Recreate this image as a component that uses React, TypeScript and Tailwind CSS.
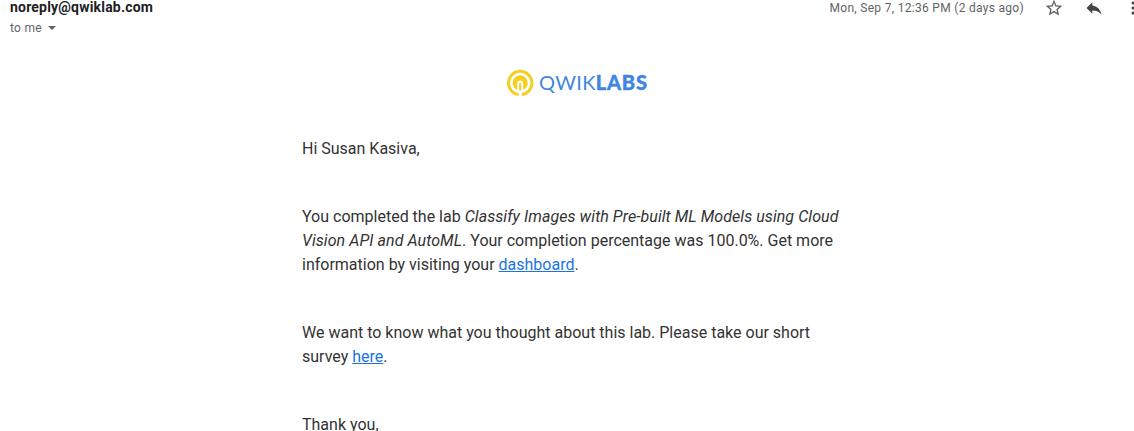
import React from "react";

export default function App() {
  return (
    <main className="h-[431px] w-[1134px] overflow-hidden bg-white font-['Roboto',sans-serif] text-[#202124]">
      <header className="flex h-9 justify-between pl-[10px] text-xs text-[#5f6368]">
        <div>
          <div className="-mt-[3px] mb-px text-sm leading-5 font-bold tracking-[0.2px] text-[#202124]">noreply@qwiklab.com</div>
          <div className="flex items-center leading-5 tracking-[0.3px]">
            to me
            <svg className="ml-[6px]" width="8" height="4" viewBox="0 0 8 4" fill="#5f6368"><path d="M0 0h8L4 4z" /></svg>
          </div>
        </div>
        <div className="flex h-4 items-center">
          <time className="tracking-[0.3px]">Mon, Sep 7, 12:36 PM (2 days ago)</time>
          <svg className="ml-5" width="20" height="20" viewBox="0 0 24 24" fill="#5f6368"><path d="M22 9.24l-7.19-.62L12 2 9.19 8.63 2 9.24l5.46 4.73L5.82 21 12 17.27 18.18 21l-1.63-7.03L22 9.24zM12 15.4l-3.76 2.27 1-4.28-3.32-2.88 4.38-.38L12 6.1l1.71 4.04 4.38.38-3.32 2.88 1 4.28L12 15.4z" /></svg>
          <svg className="ml-5" width="20" height="20" viewBox="0 0 24 24" fill="#444444"><path d="M10 9V5l-7 7 7 7v-4.1c5 0 8.5 1.6 11 5.1-1-5-4-10-11-11z" /></svg>
          <svg className="ml-[27px]" width="3" height="16" viewBox="0 0 3 16" fill="#444444"><circle cx="2" cy="3" r="1.5" /><circle cx="2" cy="8" r="1.5" /><circle cx="2" cy="13" r="1.5" /></svg>
        </div>
      </header>
      <article className="ml-[302px] w-[550px] text-base leading-6 text-[#333333]">
        <div className="mt-8 ml-[204px] flex h-[30px] items-center">
          <svg width="28" height="28" viewBox="0 0 28 28" fill="none">
            <path d="M12.6 25.6A11.7 11.7 0 1 1 15.8 25.6" stroke="#f5cf1c" strokeWidth="3" />
            <path d="M11.2 20.8A7.6 7.6 0 1 1 17.2 20.8V14.4a3 3 0 0 0-6 0z" fill="#f5cf1c" />
            <path d="M13.2 14h2v7.5h-2z" fill="#f5cf1c" />
          </svg>
          <span className="-mt-[2px] ml-[5px] font-['Lato',sans-serif] text-xl text-[#4285e0]"><span className="tracking-[0.35px]">QWIK</span><span className="font-black tracking-[0.8px] [-webkit-text-stroke:0.4px_#4285e0]">LABS</span></span>
        </div>
        <p className="mt-[39px]">Hi Susan Kasiva,</p>
        <p className="mt-11">You completed the lab <i className="tracking-[0.06px]">Classify Images with Pre-built ML Models using Cloud<br />Vision API and AutoML</i>. Your completion percentage was 100.0%. Get more<br />information by visiting your <a href="#" className="text-[#1a73e8] underline">dashboard</a>.</p>
        <p className="mt-11">We want to know what you thought about this lab. Please take our short<br />survey <a href="#" className="text-[#1a73e8] underline">here</a>.</p>
        <p className="mt-11">Thank you,</p>
      </article>
    </main>
  );
}
